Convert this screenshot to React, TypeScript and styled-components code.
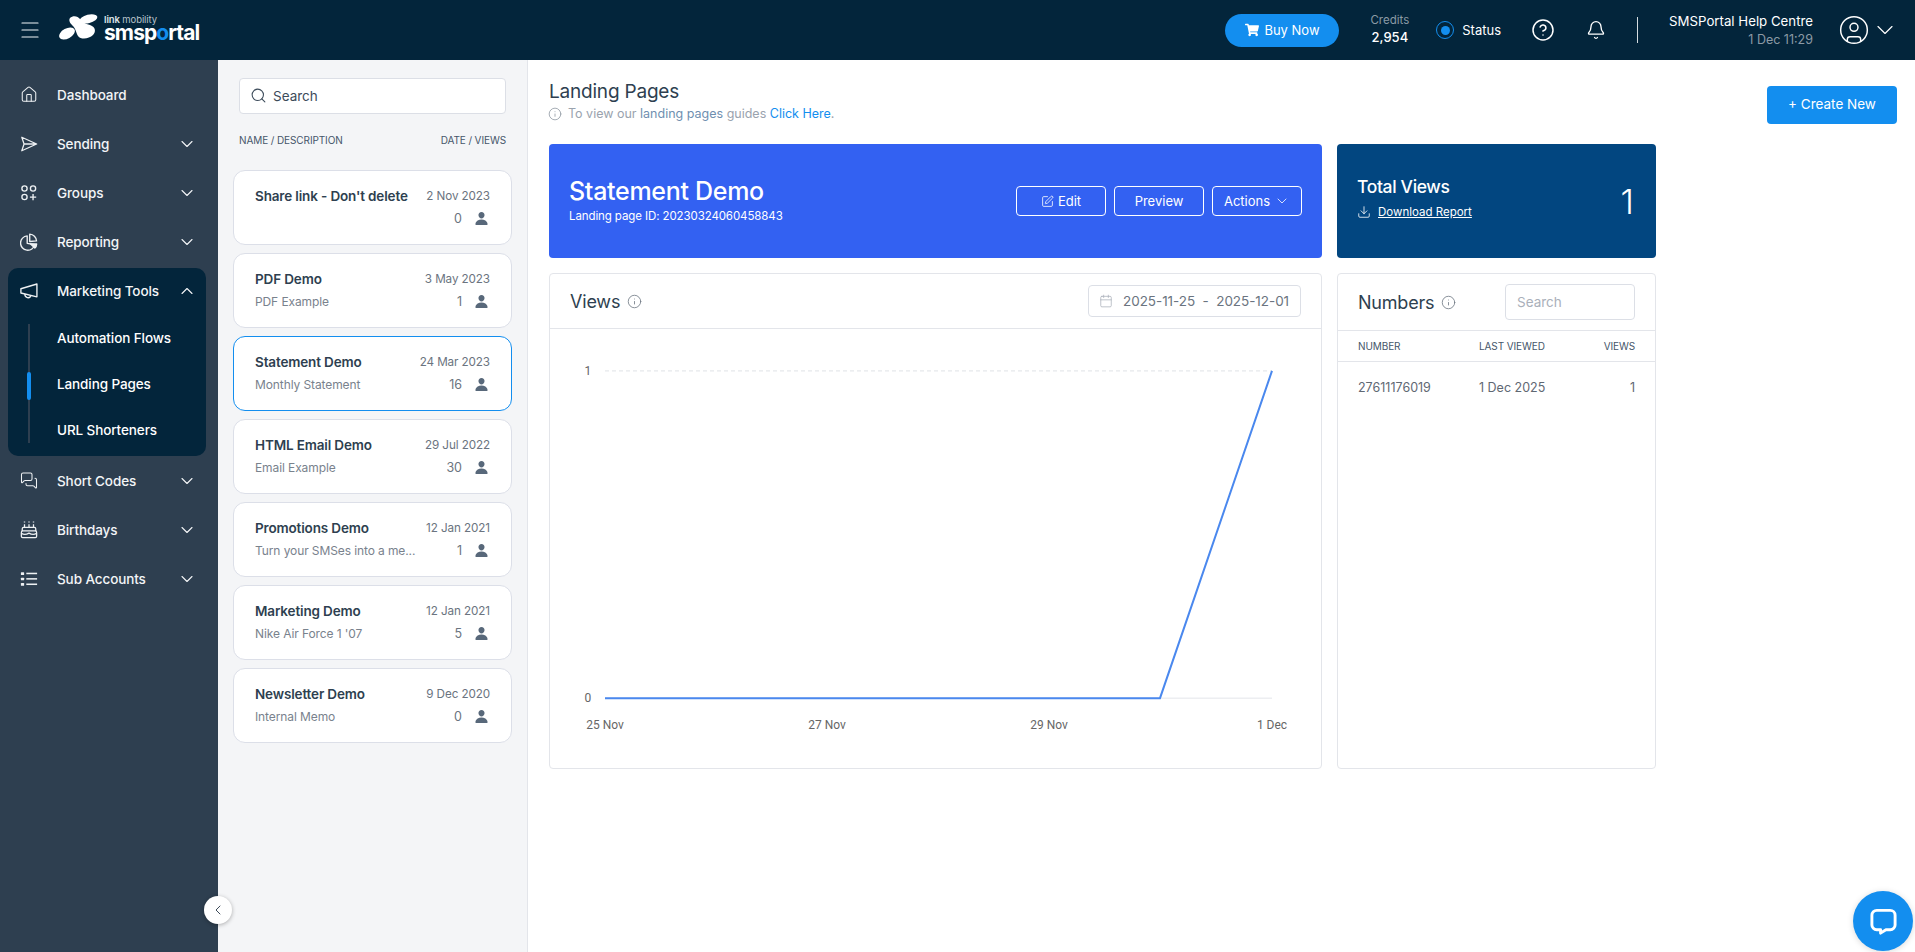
import React from "react";
import styled, { createGlobalStyle } from "styled-components";
import { Home, Search, Info, ChevronDown, ChevronUp, ChevronLeft, MessagesSquare, Bell, CircleHelp, CircleUser, SquarePen, Download, Calendar, Menu } from "lucide-react";
import { FaShoppingCart } from "react-icons/fa";
import { IoPerson } from "react-icons/io5";

const Global = createGlobalStyle`
  * { box-sizing: border-box; }
  html, body { margin: 0; padding: 0; height: 100%; overflow: hidden; background: #fff; }
  body { font-family: Inter, "Noto Sans", "Liberation Sans", sans-serif; color: #2e3f50; }
`;

const Page = styled.div`
  width: 1915px; height: 952px; position: relative; display: grid;
  grid-template-rows: 60px 1fr; overflow: hidden;
`;
const TopBar = styled.header`
  background: #03253b; display: flex; align-items: center; color: #fff; padding: 0 16px 0 18px;
`;
const MenuBtn = styled.div` display: flex; margin-right: 17px; color: #f2f5f7; `;
const Logo = styled.div` display: flex; align-items: center; gap: 6px; `;
const LogoMark = styled.svg` margin-top: -5px; `;
const LogoText = styled.div` display: flex; flex-direction: column; line-height: 1; margin-top: -2px; `;
const LogoTop = styled.span` font-size: 9.5px; color: #b9c4cc; letter-spacing: -.1px; height: 10px; line-height: 10px; b { font-weight: 600; color: #dfe5e9; } `;
const LogoMain = styled.span` font-size: 21px; font-weight: 700; letter-spacing: -.9px; height: 21px; line-height: 20px; margin-top: -2px; i { font-style: normal; color: #138eef; } `;
const Grow = styled.div` flex: 1; `;
const BuyNow = styled.div`
  width: 114px; height: 33px; margin-right: 31px; border-radius: 17px; background: #138eef;
  display: flex; align-items: center; justify-content: center; gap: 5px; font-size: 13px; font-weight: 400;
`;
const Credits = styled.div` display: flex; flex-direction: column; align-items: center; margin-right: 27px; `;
const CreditsLabel = styled.span` font-size: 11.5px; color: #8b9aa5; line-height: 15px; `;
const CreditsValue = styled.span` font-size: 13px; font-weight: 500; line-height: 19px; `;
const Status = styled.div` display: flex; align-items: center; gap: 8px; font-size: 13px; font-weight: 400; margin-right: 30px; `;
const StatusDot = styled.span`
  width: 18px; height: 18px; border-radius: 50%; border: 1.5px solid #138eef; display: flex; align-items: center; justify-content: center;
  &::after { content: ""; width: 9px; height: 9px; border-radius: 50%; background: #138eef; }
`;
const TopIcon = styled.div<{ $gap: number }>` display: flex; margin-right: ${p => p.$gap}px; `;
const VLine = styled.div` width: 1px; height: 26px; background: #d5dce0; margin-right: 31px; `;
const Help = styled.div` display: flex; flex-direction: column; align-items: flex-end; margin-right: 25px; `;
const HelpTitle = styled.span` font-size: 13.25px; font-weight: 400; line-height: 19px; `;
const HelpSub = styled.span` font-size: 12.5px; color: #8b9aa5; line-height: 17px; `;
const User = styled.div` display: flex; align-items: center; gap: 1px; `;

const Body = styled.div` display: grid; grid-template-columns: 218px 310px 1fr; min-height: 0; `;
const Side = styled.nav` background: #2e3f50; padding-top: 11px; display: flex; flex-direction: column; color: #fff; `;
const NavRow = styled.div`
  height: 49px; display: grid; grid-template-columns: 37px 1fr 20px; align-items: center; padding: 0 21px 2px 20px;
  font-size: 13.5px; font-weight: 500; letter-spacing: -.1px; color: #f3f5f7;
`;
const NavIcon = styled.div` width: 18px; height: 20px; display: flex; align-items: center; justify-content: center; color: #eef1f3; `;
const Group = styled.div` margin: 1px 12px 1px 8px; background: #03253b; border-radius: 10px; height: 188px; `;
const GroupHead = styled(NavRow)` padding: 0 9px 3px 12px; `;
const SubList = styled.div` position: relative; padding: 0 0 0 49px; display: flex; flex-direction: column; margin-top: -2px; `;
const Track = styled.div` position: absolute; left: 20px; top: 9px; height: 119px; width: 2px; background: #2e3f50; `;
const TrackMark = styled.div` position: absolute; left: 19px; top: 57px; height: 28px; width: 4px; border-radius: 2px; background: #138eef; `;
const SubItem = styled.div` height: 46px; display: flex; align-items: center; font-size: 13.5px; font-weight: 500; letter-spacing: -.1px; color: #fff; `;

const ListPanel = styled.section` background: #f4f5f7; border-right: 1px solid #e3e5ea; padding: 18px 15px 0; display: flex; flex-direction: column; `;
const SearchBox = styled.div`
  height: 36px; margin: 0 6px; background: #fff; border: 1px solid #dcdfe6; border-radius: 4px; display: flex; align-items: center; gap: 6px; padding: 0 10px 1px;
  font-size: 13.5px; color: #3c4b5a;
`;
const ListHead = styled.div`
  display: flex; justify-content: space-between; margin: 19px 6px 22px; font-size: 10px; line-height: 15px; color: #46566a; letter-spacing: -.1px;
`;
const Cards = styled.div` display: flex; flex-direction: column; gap: 8px; `;
const Card = styled.div<{ $active?: boolean }>`
  height: 75px; background: #fff; border-radius: 12px; border: 1px solid ${p => p.$active ? "#138eef" : "#dcdfe8"};
  padding: 14px 21px 0 21px; display: grid; grid-template-columns: 1fr auto; grid-template-rows: 22px 23px; align-items: center; column-gap: 8px;
`;
const CardName = styled.span` font-size: 13.5px; font-weight: 600; color: #2e3f50; letter-spacing: -.15px; white-space: nowrap; `;
const CardDate = styled.span` font-size: 11.7px; color: #6b7480; white-space: nowrap; letter-spacing: -.1px; `;
const CardDesc = styled.span` font-size: 12px; color: #79828d; white-space: nowrap; letter-spacing: -.1px; `;
const CardViews = styled.span` display: flex; align-items: center; justify-content: flex-end; gap: 12px; padding-right: 1px; font-size: 12.5px; color: #6b7480; svg { color: #58687a; } `;

const Main = styled.main` padding: 19px 18px 0 21px; display: flex; flex-direction: column; `;
const MainTop = styled.div` display: flex; justify-content: space-between; height: 65px; `;
const Title = styled.h1` margin: 1px 0 0; font-size: 19px; font-weight: 400; line-height: 24px; color: #2e3f50; letter-spacing: -.2px; `;
const Hint = styled.div` display: flex; align-items: center; gap: 6px; margin-top: 1px; margin-left: -1px; font-size: 12.5px; line-height: 18px; color: #9aa3ae; a { color: #138eef; } em { font-style: normal; color: #6f8fb0; } svg { color: #8a939d; } `;
const CreateBtn = styled.div`
  width: 130px; height: 38px; margin-top: 7px; padding-bottom: 2px; background: #138eef; border-radius: 4px; color: #fff; display: flex; align-items: center; justify-content: center;
  font-size: 13.5px; font-weight: 400;
`;
const Columns = styled.div` display: grid; grid-template-columns: 773px 319px; column-gap: 15px; grid-template-rows: 114px 496px; row-gap: 15px; width: 1107px; `;
const Hero = styled.div` background: #3361f2; border-radius: 4px; color: #fff; padding: 0 20px; display: flex; align-items: center; justify-content: space-between; `;
const HeroTitleBlock = styled.div` margin-top: -4px; `;
const HeroName = styled.div` font-size: 25px; font-weight: 500; line-height: 32px; letter-spacing: -.3px; `;
const HeroId = styled.div` font-size: 11.5px; font-weight: 400; line-height: 15px; margin-top: 2px; letter-spacing: -.1px; `;
const HeroBtns = styled.div` display: flex; gap: 8px; `;
const HeroBtn = styled.div`
  width: 90px; height: 30px; border: 1px solid #fff; border-radius: 4px; display: flex; align-items: center; justify-content: center; gap: 4px; font-size: 13px; font-weight: 400;
`;
const Total = styled.div` background: #024680; border-radius: 4px; color: #fff; padding: 0 22px 0 20px; display: flex; align-items: center; justify-content: space-between; `;
const TotalBlock = styled.div` margin-top: -5px; `;
const TotalTitle = styled.div` font-size: 17.5px; font-weight: 500; line-height: 24px; letter-spacing: -.35px; margin-top: -1px; `;
const TotalLink = styled.div` display: flex; align-items: center; gap: 7px; font-size: 11.5px; line-height: 18px; margin-top: 4px; span { text-decoration: underline; } `;
const TotalNum = styled.div` font-size: 34px; font-weight: 300; `;
const Panel = styled.div` border: 1px solid #e3e5ea; border-radius: 4px; background: #fff; display: flex; flex-direction: column; overflow: hidden; `;
const ViewsHead = styled.div` height: 55px; flex: none; border-bottom: 1px solid #e3e5ea; display: flex; align-items: center; justify-content: space-between; padding: 0 20px; `;
const PanelTitle = styled.div` display: flex; align-items: center; gap: 7px; font-size: 18px; font-weight: 400; color: #2e3f50; letter-spacing: -.2px; svg { color: #6e7883; } `;
const DateBox = styled.div` width: 213px; height: 32px; border: 1px solid #dcdfe6; border-radius: 4px; display: flex; align-items: center; padding: 0 10px; gap: 10px; font-size: 13.5px; letter-spacing: -.05px; color: #6b7480; white-space: nowrap; svg { color: #a9b0b9; flex: none; } `;
const Chart = styled.svg` display: block; flex: 1; width: 100%; `;
const NumbersHead = styled.div` height: 57px; flex: none; border-bottom: 1px solid #e3e5ea; display: flex; align-items: center; justify-content: space-between; padding: 0 20px; `;
const NumSearch = styled.div` width: 130px; height: 36px; border: 1px solid #dcdfe6; border-radius: 4px; display: flex; align-items: center; padding: 0 11px; font-size: 13.5px; color: #aab0ba; `;
const TableRow = styled.div<{ $head?: boolean }>`
  display: grid; grid-template-columns: 121px 1fr auto; align-items: center; padding: 0 20px;
  height: ${p => p.$head ? "31px" : "50px"};
  font-size: ${p => p.$head ? "10px" : "12.5px"};
  color: ${p => p.$head ? "#46566a" : "#5f6873"};
  border-bottom: ${p => p.$head ? "1px solid #e3e5ea" : "none"};
  letter-spacing: ${p => p.$head ? "-.1px" : "0"};
`;
const Collapse = styled.div`
  position: absolute; left: 204px; top: 896px; width: 28px; height: 28px; border-radius: 50%; background: #fff; box-shadow: 0 1px 4px rgba(0,0,0,.3);
  display: flex; align-items: center; justify-content: center; color: #3d4b59;
`;
const Chat = styled.div`
  position: absolute; left: 1853px; top: 891px; width: 60px; height: 60px; border-radius: 50%; background: #138eef; box-shadow: 0 1px 6px rgba(0,0,0,.15);
  display: flex; align-items: center; justify-content: center;
`;

const iconProps = { size: 23, strokeWidth: 1.4 };
const chev = { size: 20, strokeWidth: 1.3 };
const PieIcon = (
  <svg width="20" height="20" viewBox="0 0 20 20" fill="none" stroke="currentColor" strokeWidth="1.5" strokeLinejoin="round">
    <path d="M8 3.2A8 8 0 1 0 16.4 13L8 11.5Z" />
    <path d="M10.8 1.2a8 8 0 0 1 7.6 7.6l-7.6.6Z" />
    <path d="M11.5 12l7 .2a6 6 0 0 1-2 4.5Z" fill="currentColor" />
  </svg>
);
const ListIcon = (
  <svg width="20" height="20" viewBox="0 0 20 20" fill="#eef1f3">
    <rect x="1" y="2.5" width="3.6" height="3" rx=".6" /><rect x="1" y="8.5" width="3.6" height="3" rx=".6" /><rect x="1" y="14.5" width="3.6" height="3" rx=".6" />
    <rect x="7" y="3" width="12" height="1.7" /><rect x="7" y="9" width="12" height="1.7" /><rect x="7" y="15" width="12" height="1.7" />
  </svg>
);
const CakeIcon = (
  <svg width="20" height="20" viewBox="0 0 20 20" fill="none" stroke="currentColor" strokeWidth="1.4" strokeLinejoin="round">
    <path d="M5 3.5v3.5M10 3.5v3.5M15 3.5v3.5" />
    <path d="M5 .6v1.2M10 .6v1.2M15 .6v1.2" strokeWidth="1.6" />
    <path d="M4 7h12a1.5 1.5 0 0 1 1.5 1.5V11h-15V8.5A1.5 1.5 0 0 1 4 7Z" />
    <path d="M2.5 11c-1 .5-1 1-1 2v4a1.5 1.5 0 0 0 1.5 1.5h14a1.5 1.5 0 0 0 1.5-1.5v-4c0-1 0-1.5-1-2" />
    <path d="M1.5 13.5c2.5 2 5 2 8.5 0 3.5 2 6 2 8.5 0" />
  </svg>
);
const MegaIcon = (
  <svg width="20" height="20" viewBox="0 0 20 20" fill="none" stroke="currentColor" strokeWidth="1.5" strokeLinejoin="round">
    <path d="M1 7.5 18.8 2.2V16.5L1 12.2Z" />
    <path d="M5.5 13.3a3.5 3.5 0 0 0 6.8 1.6" />
  </svg>
);
const navTop = [
  { label: "Dashboard", icon: <Home {...iconProps} /> },
  { label: "Sending", chev: true, icon: <svg width="20" height="20" viewBox="0 0 20 20" fill="none" stroke="currentColor" strokeWidth="1.4" strokeLinejoin="round"><path d="M2 2.5 18.5 10 2 17.5 4.5 10ZM4.5 10h14" /></svg> },
  { label: "Groups", chev: true, icon: <svg width="20" height="20" viewBox="0 0 20 20" fill="none" stroke="currentColor" strokeWidth="1.5"><circle cx="5" cy="5" r="2.9" /><circle cx="14.5" cy="5" r="2.9" /><circle cx="5" cy="14.5" r="2.9" /><path d="M14.5 11v7M11 14.5h7" /></svg> },
  { label: "Reporting", chev: true, icon: PieIcon },
];
const navBottom = [
  { label: "Short Codes", icon: <MessagesSquare {...iconProps} /> },
  { label: "Birthdays", icon: CakeIcon },
  { label: "Sub Accounts", icon: ListIcon },
];
const pages = [
  { n: "Share link - Don't delete", d: "", date: "2 Nov 2023", v: 0 },
  { n: "PDF Demo", d: "PDF Example", date: "3 May 2023", v: 1 },
  { n: "Statement Demo", d: "Monthly Statement", date: "24 Mar 2023", v: 16, active: true },
  { n: "HTML Email Demo", d: "Email Example", date: "29 Jul 2022", v: 30 },
  { n: "Promotions Demo", d: "Turn your SMSes into a me...", date: "12 Jan 2021", v: 1 },
  { n: "Marketing Demo", d: "Nike Air Force 1 '07", date: "12 Jan 2021", v: 5 },
  { n: "Newsletter Demo", d: "Internal Memo", date: "9 Dec 2020", v: 0 },
];

export default function App() {
  return (
    <Page>
      <Global />
      <TopBar>
        <MenuBtn><Menu size={24} strokeWidth={1.2} /></MenuBtn>
        <Logo>
          <LogoMark width="39" height="27" viewBox="0 0 39 27" fill="#fff">
            <ellipse cx="8" cy="19.5" rx="8.5" ry="5" transform="rotate(-28 8 19.5)" />
            <ellipse cx="29.5" cy="4.8" rx="9" ry="4.2" transform="rotate(-14 29.5 4.8)" />
            <path d="M11 4c3-3 8-2 10 1 2 3 5 5 10 6 6 2 6 7 3 10-4 4-12 5-15 1-2-3-2-7-5-10-2-2-5-5-3-8Z" />
          </LogoMark>
          <LogoText>
            <LogoTop><b>link</b> mobility</LogoTop>
            <LogoMain>smsp<i>o</i>rtal</LogoMain>
          </LogoText>
        </Logo>
        <Grow />
        <BuyNow><FaShoppingCart size={14} />Buy Now</BuyNow>
        <Credits><CreditsLabel>Credits</CreditsLabel><CreditsValue>2,954</CreditsValue></Credits>
        <Status><StatusDot />Status</Status>
        <TopIcon $gap={31}><CircleHelp size={24} strokeWidth={1.5} /></TopIcon>
        <TopIcon $gap={31}><Bell size={20} strokeWidth={1.6} /></TopIcon>
        <VLine />
        <Help><HelpTitle>SMSPortal Help Centre</HelpTitle><HelpSub>1 Dec 11:29</HelpSub></Help>
        <User><CircleUser size={32} strokeWidth={1.1} /><ChevronDown size={28} strokeWidth={1} /></User>
      </TopBar>
      <Body>
        <Side>
          {navTop.map(n => (
            <NavRow key={n.label}><NavIcon>{n.icon}</NavIcon><span>{n.label}</span>{n.chev ? <ChevronDown {...chev} /> : <i />}</NavRow>
          ))}
          <Group>
            <GroupHead><NavIcon>{MegaIcon}</NavIcon><span>Marketing Tools</span><ChevronUp {...chev} /></GroupHead>
            <SubList>
              <Track /><TrackMark />
              <SubItem>Automation Flows</SubItem>
              <SubItem>Landing Pages</SubItem>
              <SubItem>URL Shorteners</SubItem>
            </SubList>
          </Group>
          {navBottom.map(n => (
            <NavRow key={n.label}><NavIcon>{n.icon}</NavIcon><span>{n.label}</span><ChevronDown {...chev} /></NavRow>
          ))}
        </Side>
        <ListPanel>
          <SearchBox><Search size={17} strokeWidth={1.5} />Search</SearchBox>
          <ListHead><span>NAME / DESCRIPTION</span><span>DATE / VIEWS</span></ListHead>
          <Cards>
            {pages.map(p => (
              <Card key={p.n} $active={p.active}>
                <CardName>{p.n}</CardName><CardDate>{p.date}</CardDate>
                <CardDesc>{p.d}</CardDesc><CardViews>{p.v}<IoPerson size={15} /></CardViews>
              </Card>
            ))}
          </Cards>
        </ListPanel>
        <Main>
          <MainTop>
            <div>
              <Title>Landing Pages</Title>
              <Hint><Info size={14} strokeWidth={1.3} /><span>To view our <em>landing pages</em> guides <a>Click Here</a>.</span></Hint>
            </div>
            <CreateBtn>+ Create New</CreateBtn>
          </MainTop>
          <Columns>
            <Hero>
              <HeroTitleBlock><HeroName>Statement Demo</HeroName><HeroId>Landing page ID: 20230324060458843</HeroId></HeroTitleBlock>
              <HeroBtns>
                <HeroBtn><SquarePen size={13} strokeWidth={1.5} />Edit</HeroBtn>
                <HeroBtn>Preview</HeroBtn>
                <HeroBtn>Actions<ChevronDown size={16} strokeWidth={1.2} /></HeroBtn>
              </HeroBtns>
            </Hero>
            <Total>
              <TotalBlock>
                <TotalTitle>Total Views</TotalTitle>
                <TotalLink><Download size={14} strokeWidth={1.4} /><span>Download Report</span></TotalLink>
              </TotalBlock>
              <TotalNum>1</TotalNum>
            </Total>
            <Panel>
              <ViewsHead>
                <PanelTitle>Views<Info size={15} strokeWidth={1.3} /></PanelTitle>
                <DateBox><Calendar size={14} strokeWidth={1.3} /><span>2025-11-25&nbsp; - &nbsp;2025-12-01</span></DateBox>
              </ViewsHead>
              <Chart viewBox="0 0 771 440" preserveAspectRatio="none">
                <line x1="55" x2="722" y1="42" y2="42" stroke="#dfe2e6" strokeDasharray="4 3" />
                <line x1="55" x2="722" y1="370" y2="370" stroke="#e3e5ea" />
                <polyline points="55,370 610,370 722,42" fill="none" stroke="#4a88ee" strokeWidth="2" />
                <g fontFamily="Roboto, Inter, sans-serif" fontSize="12" fill="#666">
                  <text x="38" y="46" textAnchor="middle">1</text>
                  <text x="38" y="374" textAnchor="middle">0</text>
                  <text x="55" y="401" textAnchor="middle">25 Nov</text>
                  <text x="277" y="401" textAnchor="middle">27 Nov</text>
                  <text x="499" y="401" textAnchor="middle">29 Nov</text>
                  <text x="722" y="401" textAnchor="middle">1 Dec</text>
                </g>
              </Chart>
            </Panel>
            <Panel>
              <NumbersHead>
                <PanelTitle>Numbers<Info size={15} strokeWidth={1.3} /></PanelTitle>
                <NumSearch>Search</NumSearch>
              </NumbersHead>
              <TableRow $head><span>NUMBER</span><span>LAST VIEWED</span><span>VIEWS</span></TableRow>
              <TableRow><span>27611176019</span><span>1 Dec 2025</span><span>1</span></TableRow>
            </Panel>
          </Columns>
        </Main>
      </Body>
      <Collapse><ChevronLeft size={16} strokeWidth={1.5} /></Collapse>
      <Chat>
        <svg width="29" height="29" viewBox="0 0 30 30" fill="none" stroke="#fff" strokeWidth="3" strokeLinejoin="round"><path d="M8 3.5h14a5 5 0 0 1 5 5v10a5 5 0 0 1-5 5h-4.5l-5.5 3.5v-3.5H8a5 5 0 0 1-5-5v-10a5 5 0 0 1 5-5Z" /></svg>
      </Chat>
    </Page>
  );
}
